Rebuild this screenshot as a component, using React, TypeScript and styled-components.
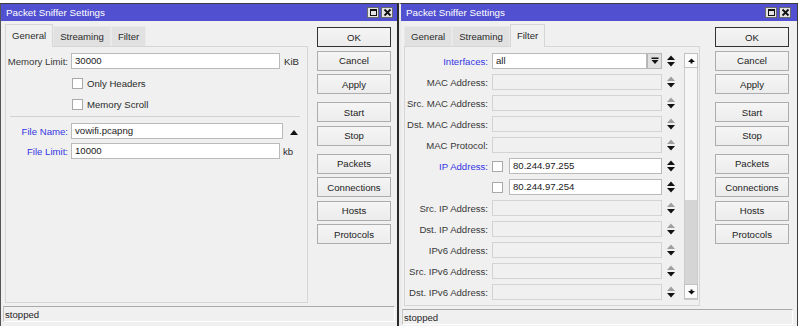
import React from "react";
import styled, { createGlobalStyle } from "styled-components";

const GlobalStyle = createGlobalStyle`
  html, body {
    margin: 0;
    padding: 0;
    background: #ffffff;
  }
  body {
    font-family: "Liberation Sans", Arial, sans-serif;
    font-size: 9.6px;
    color: #2b2b2b;
  }
  * {
    box-sizing: border-box;
  }
`;

const Desktop = styled.div`
  display: flex;
  width: 800px;
  height: 326px;
  overflow: hidden;
  background: #ffffff;
`;

const Window = styled.div<{ $width: number; $pb: number; $left: string; $right: string }>`
  width: ${(p) => p.$width}px;
  height: 323px;
  margin-top: 3px;
  flex: none;
  display: flex;
  flex-direction: column;
  background: #f0f0f0;
  border-top: 1px solid #3c3c3c;
  border-left: ${(p) => p.$left};
  border-right: ${(p) => p.$right};
  padding-bottom: ${(p) => p.$pb}px;
`;

const TitleBar = styled.div<{ $pr: number }>`
  height: 17px;
  flex: none;
  display: flex;
  align-items: center;
  justify-content: space-between;
  padding: 0 ${(p) => p.$pr}px 0 5px;
  background: #5050d0;
  color: #ffffff;
  font-size: 9.8px;
`;

const TitleButtons = styled.div`
  display: flex;
  gap: 2px;
`;

const TitleButton = styled.span`
  width: 12px;
  height: 11px;
  display: flex;
  align-items: center;
  justify-content: center;
  background: #e4e4e4;
  border: 1px solid #6a6a6a;
`;

const Body = styled.div<{ $pl: number; $pr: number }>`
  flex: 1;
  min-height: 0;
  display: flex;
  padding: 3px ${(p) => p.$pr}px 0 ${(p) => p.$pl}px;
`;

const Main = styled.div<{ $gap: number }>`
  flex: 1;
  display: flex;
  flex-direction: column;
  margin-right: ${(p) => p.$gap}px;
`;

const TabStrip = styled.div`
  height: 22px;
  flex: none;
  display: flex;
  align-items: flex-end;
`;

const Tab = styled.div<{ $active?: boolean }>`
  height: ${(p) => (p.$active ? 23 : 20)}px;
  padding: ${(p) => (p.$active ? "0 6px 2px" : "0 6px")};
  margin-bottom: ${(p) => (p.$active ? -1 : 0)}px;
  display: flex;
  align-items: center;
  background: ${(p) => (p.$active ? "#f0f0f0" : "#e1e1e1")};
  border: 1px solid ${(p) => (p.$active ? "#d6d6d6" : "#e9e9e9")};
  border-bottom: 0;
  position: relative;
  z-index: ${(p) => (p.$active ? 1 : 0)};
  color: #2b2b2b;
`;

const Panel = styled.div`
  flex: 1;
  border: 1px solid #d6d6d6;
  background: #f0f0f0;
  padding-top: 6px;
`;

const FieldRow = styled.div<{ $mt?: number; $indent?: number }>`
  height: 16px;
  display: flex;
  align-items: center;
  margin-top: ${(p) => p.$mt ?? 0}px;
  padding-left: ${(p) => p.$indent ?? 0}px;
`;

const FieldLabel = styled.span<{ $w: number; $gap: number; $blue?: boolean }>`
  width: ${(p) => p.$w}px;
  flex: none;
  padding-right: ${(p) => p.$gap}px;
  text-align: right;
  white-space: nowrap;
  color: ${(p) => (p.$blue ? "#3535e4" : "#383838")};
`;

const TextBox = styled.div<{ $w: number; $disabled?: boolean }>`
  width: ${(p) => p.$w}px;
  height: 16px;
  flex: none;
  padding-left: 3px;
  line-height: 14px;
  border: 1px solid ${(p) => (p.$disabled ? "#d3d3d3" : "#bababa")};
  background: ${(p) => (p.$disabled ? "#f0f0f0" : "#ffffff")};
  color: #1a1a1a;
  white-space: nowrap;
`;

const Unit = styled.span<{ $ml: number }>`
  margin-left: ${(p) => p.$ml}px;
  color: #2b2b2b;
`;

const CheckBox = styled.span<{ $mr?: number }>`
  width: 11px;
  height: 11px;
  flex: none;
  margin-right: ${(p) => p.$mr ?? 0}px;
  background: #ffffff;
  border: 1px solid #a9a9a9;
`;

const CheckText = styled.span`
  margin-left: 4px;
  color: #2b2b2b;
`;

const Separator = styled.div`
  height: 1px;
  margin: 4px 7px 6px 4px;
  background: #d2d2d2;
`;

const FilterGrid = styled.div`
  display: flex;
  align-items: stretch;
`;

const FilterFields = styled.div`
  display: flex;
  flex-direction: column;
  gap: 5px;
`;

const FieldBox = styled.div`
  width: 170px;
  height: 16px;
  flex: none;
  display: flex;
  align-items: center;
`;

const DropButton = styled.span`
  width: 15px;
  height: 16px;
  flex: none;
  display: flex;
  align-items: center;
  justify-content: center;
  background: #e0e0e0;
  border: 1px solid #b5b5b5;
`;

const ArrowCell = styled.span`
  width: 8px;
  margin-left: 5px;
  display: flex;
  align-items: center;
`;

const ScrollBar = styled.div`
  width: 14px;
  margin-left: 9px;
  display: flex;
  flex-direction: column;
  border: 1px solid #cbcbcb;
  background: #f6f6f6;
`;

const ScrollButton = styled.span`
  height: 15px;
  flex: none;
  display: flex;
  align-items: center;
  justify-content: center;
  background: #fbfbfb;
  border: 1px solid #c2c2c2;
  margin: -1px -1px 0;
`;

const ScrollTrack = styled.div`
  flex: 1;
  display: flex;
  flex-direction: column;
  justify-content: flex-end;
`;

const ScrollThumb = styled.div`
  height: 85px;
  background: #d5d5d5;
`;

const ButtonColumn = styled.div`
  width: 74px;
  flex: none;
  display: flex;
  flex-direction: column;
  gap: 8px;
  padding-top: 3px;
`;

const ButtonGroup = styled.div`
  display: flex;
  flex-direction: column;
  gap: 3.5px;
`;

const PushButton = styled.div<{ $default?: boolean }>`
  height: 20px;
  display: flex;
  align-items: center;
  justify-content: center;
  background: linear-gradient(#f5f5f5, #ececec);
  border: 1px solid ${(p) => (p.$default ? "#333333" : "#adadad")};
  color: #222222;
`;

const StatusBar = styled.div<{ $ml: number; $mr: number }>`
  height: 16px;
  flex: none;
  margin: 3px ${(p) => p.$mr}px 0 ${(p) => p.$ml}px;
  padding-left: 1px;
  display: flex;
  align-items: center;
  border-top: 1px solid #a9a9a9;
  border-left: 1px solid #c4c4c4;
  border-right: 1px solid #ffffff;
  border-bottom: 1px solid #ffffff;
  color: #1f1f1f;
`;

const MaximizeIcon = () => (
  <svg width="9" height="9" viewBox="0 0 9 9">
    <rect x="1.5" y="1.5" width="6" height="6" fill="none" stroke="#111" strokeWidth="1" />
    <rect x="1" y="1" width="7" height="2" fill="#111" />
  </svg>
);

const CloseIcon = () => (
  <svg width="9" height="9" viewBox="0 0 9 9">
    <path d="M1.5 1.5 L7.5 7.5 M7.5 1.5 L1.5 7.5" stroke="#111" strokeWidth="1.8" />
  </svg>
);

const SortArrows = ({ dim }: { dim?: boolean }) => (
  <svg width="8" height="12" viewBox="0 0 8 12">
    <path d="M4 0.5 L8 5 L0 5 Z" fill={dim ? "#a0a0a0" : "#111"} />
    <path d="M0 7 L8 7 L4 11.5 Z" fill="#111" />
  </svg>
);

const DropIcon = () => (
  <svg width="8" height="8" viewBox="0 0 8 8">
    <rect x="0.5" y="0.5" width="7" height="1.5" fill="#111" />
    <path d="M0.5 3 L7.5 3 L4 7 Z" fill="#111" />
  </svg>
);

const UpTriangle = () => (
  <svg width="8" height="5" viewBox="0 0 8 5">
    <path d="M4 0 L8 5 L0 5 Z" fill="#111" />
  </svg>
);

const ScrollUpIcon = () => (
  <svg width="7" height="6" viewBox="0 0 7 6">
    <path d="M3.5 0.5 L7 4 L0 4 Z" fill="#111" />
    <rect x="2.5" y="4" width="2" height="1.5" fill="#111" />
  </svg>
);

const ScrollDownIcon = () => (
  <svg width="7" height="6" viewBox="0 0 7 6">
    <rect x="2.5" y="0.5" width="2" height="1.5" fill="#111" />
    <path d="M0 2 L7 2 L3.5 5.5 Z" fill="#111" />
  </svg>
);

const Title = () => (
  <>
    <span>Packet Sniffer Settings</span>
    <TitleButtons>
      <TitleButton>
        <MaximizeIcon />
      </TitleButton>
      <TitleButton>
        <CloseIcon />
      </TitleButton>
    </TitleButtons>
  </>
);

const Buttons = () => (
  <ButtonColumn>
    <ButtonGroup>
      <PushButton $default>OK</PushButton>
      <PushButton>Cancel</PushButton>
      <PushButton>Apply</PushButton>
    </ButtonGroup>
    <ButtonGroup>
      <PushButton>Start</PushButton>
      <PushButton>Stop</PushButton>
    </ButtonGroup>
    <ButtonGroup>
      <PushButton>Packets</PushButton>
      <PushButton>Connections</PushButton>
      <PushButton>Hosts</PushButton>
      <PushButton>Protocols</PushButton>
    </ButtonGroup>
  </ButtonColumn>
);

type FilterField = {
  label: string;
  blue?: boolean;
  kind: "drop" | "check" | "plain";
  value?: string;
  disabled?: boolean;
};

const filterFields: FilterField[] = [
  { label: "Interfaces:", blue: true, kind: "drop", value: "all" },
  { label: "MAC Address:", kind: "plain", disabled: true },
  { label: "Src. MAC Address:", kind: "plain", disabled: true },
  { label: "Dst. MAC Address:", kind: "plain", disabled: true },
  { label: "MAC Protocol:", kind: "plain", disabled: true },
  { label: "IP Address:", blue: true, kind: "check", value: "80.244.97.255" },
  { label: "", kind: "check", value: "80.244.97.254" },
  { label: "Src. IP Address:", kind: "plain", disabled: true },
  { label: "Dst. IP Address:", kind: "plain", disabled: true },
  { label: "IPv6 Address:", kind: "plain", disabled: true },
  { label: "Src. IPv6 Address:", kind: "plain", disabled: true },
  { label: "Dst. IPv6 Address:", kind: "plain", disabled: true },
];

const GeneralWindow = () => (
  <Window $width={399} $pb={4} $left="1px solid #555555" $right="2px solid #2a2a2a">
    <TitleBar $pr={4}>
      <Title />
    </TitleBar>
    <Body $pl={4} $pr={6}>
      <Main $gap={9}>
        <TabStrip>
          <Tab $active>General</Tab>
          <Tab>Streaming</Tab>
          <Tab>Filter</Tab>
        </TabStrip>
        <Panel>
          <FieldRow>
            <FieldLabel $w={65} $gap={3}>Memory Limit:</FieldLabel>
            <TextBox $w={209}>30000</TextBox>
            <Unit $ml={4}>KiB</Unit>
          </FieldRow>
          <FieldRow $mt={6} $indent={66}>
            <CheckBox />
            <CheckText>Only Headers</CheckText>
          </FieldRow>
          <FieldRow $mt={5} $indent={66}>
            <CheckBox />
            <CheckText>Memory Scroll</CheckText>
          </FieldRow>
          <Separator />
          <FieldRow>
            <FieldLabel $w={65} $gap={3} $blue>File Name:</FieldLabel>
            <TextBox $w={212}>vowifi.pcapng</TextBox>
            <Unit $ml={7}>
              <UpTriangle />
            </Unit>
          </FieldRow>
          <FieldRow $mt={4}>
            <FieldLabel $w={65} $gap={3} $blue>File Limit:</FieldLabel>
            <TextBox $w={209}>10000</TextBox>
            <Unit $ml={3}>kb</Unit>
          </FieldRow>
        </Panel>
      </Main>
      <Buttons />
    </Body>
    <StatusBar $ml={2} $mr={2}>stopped</StatusBar>
  </Window>
);

const FilterWindow = () => (
  <Window $width={399} $pb={1} $left="2px solid #e9e9e9" $right="1px solid #3c3c3c">
    <TitleBar $pr={6}>
      <Title />
    </TitleBar>
    <Body $pl={3} $pr={8}>
      <Main $gap={15}>
        <TabStrip>
          <Tab>General</Tab>
          <Tab>Streaming</Tab>
          <Tab $active>Filter</Tab>
        </TabStrip>
        <Panel>
          <FilterGrid>
            <FilterFields>
              {filterFields.map((f, i) => (
                <FieldRow key={i}>
                  <FieldLabel $w={87} $gap={4} $blue={f.blue}>
                    {f.label}
                  </FieldLabel>
                  <FieldBox>
                    {f.kind === "drop" && (
                      <>
                        <TextBox $w={155}>{f.value}</TextBox>
                        <DropButton>
                          <DropIcon />
                        </DropButton>
                      </>
                    )}
                    {f.kind === "check" && (
                      <>
                        <CheckBox $mr={6} />
                        <TextBox $w={153}>{f.value}</TextBox>
                      </>
                    )}
                    {f.kind === "plain" && <TextBox $w={170} $disabled={f.disabled} />}
                  </FieldBox>
                  <ArrowCell>
                    <SortArrows dim={f.disabled} />
                  </ArrowCell>
                </FieldRow>
              ))}
            </FilterFields>
            <ScrollBar>
              <ScrollButton>
                <ScrollUpIcon />
              </ScrollButton>
              <ScrollTrack>
                <ScrollThumb />
              </ScrollTrack>
              <ScrollButton>
                <ScrollDownIcon />
              </ScrollButton>
            </ScrollBar>
          </FilterGrid>
        </Panel>
      </Main>
      <Buttons />
    </Body>
    <StatusBar $ml={1} $mr={4}>stopped</StatusBar>
  </Window>
);

const App = () => {
  return (
    <>
      <GlobalStyle />
      <Desktop>
        <GeneralWindow />
        <FilterWindow />
      </Desktop>
    </>
  );
};

export default App;
